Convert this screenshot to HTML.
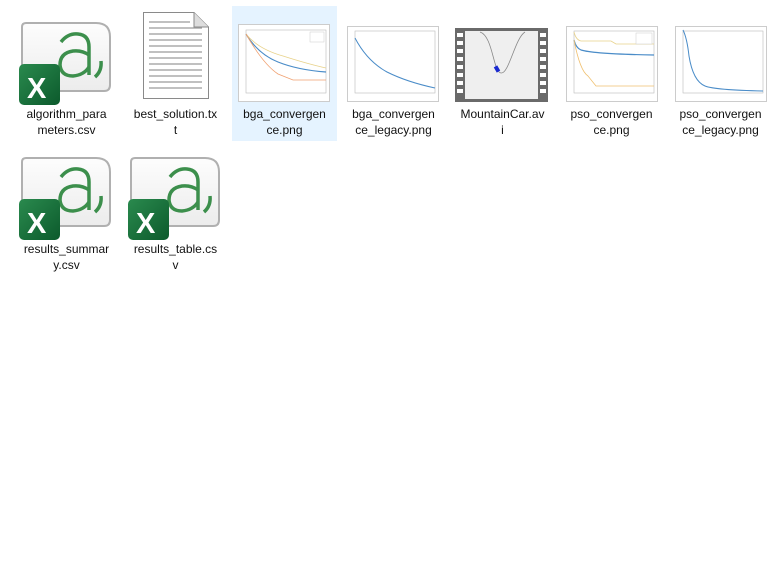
<!DOCTYPE html>
<html><head><meta charset="utf-8"><style>
body{margin:0;width:780px;height:582px;background:#fff;position:relative;overflow:hidden;font-family:"Liberation Sans","Noto Sans CJK SC",sans-serif}
.sel{position:absolute;left:232px;top:6px;width:105px;height:135px;background:#e5f3ff}
.lbl{position:absolute;width:105px;text-align:center;font-size:12px;line-height:16px;color:#111}
svg{position:absolute}
</style></head><body>
<div class="sel"></div>

<svg width="0" height="0"><defs>
<linearGradient id="cg" x1="0" y1="0" x2="0" y2="1"><stop offset="0" stop-color="#fdfdfd"/><stop offset="1" stop-color="#ececec"/></linearGradient>
<linearGradient id="xg" x1="0" y1="0" x2="1" y2="1"><stop offset="0" stop-color="#2a8a4e"/><stop offset="1" stop-color="#0c5a2c"/></linearGradient>
<g id="csv">
<path d="M4 0 H74 Q88 0 88 14 V62 Q88 68 82 68 H4 Q0 68 0 64 V4 Q0 0 4 0Z" fill="url(#cg)" stroke="#b0b0b0" stroke-width="2"/>
<g stroke="#3c8f4c" stroke-width="3.5" fill="none">
<path d="M39 19 Q46 10 56 11 Q67 12 67 24 V52"/>
<path d="M67 32 Q60 27 51 28 Q38 30 38 42 Q39 53 51 53 Q62 52 67 44"/>
<path d="M79 38 Q80 48 73 54"/>
</g>
<rect x="-3" y="41" width="41" height="41" rx="5" fill="url(#xg)"/>
<text x="5" y="75" font-family="Liberation Sans,sans-serif" font-weight="bold" font-size="29" fill="#fff">X</text>
</g>
</defs></svg>

<svg style="left:19px;top:22px" width="92" height="84" viewBox="-3 -1 92 84"><use href="#csv"/></svg>
<svg style="left:19px;top:157px" width="92" height="84" viewBox="-3 -1 92 84"><use href="#csv"/></svg>
<svg style="left:128px;top:157px" width="92" height="84" viewBox="-3 -1 92 84"><use href="#csv"/></svg>

<!-- txt -->
<svg style="left:143px;top:12px" width="66" height="87">
<path d="M0.5 0.5 H51 L65.5 15 V86.5 H0.5Z" fill="#fff" stroke="#8a8a8a"/>
<path d="M51 0.5 V15 H65.5" fill="#ddd" stroke="#8a8a8a"/>
<g stroke="#9a9a9a" stroke-width="1.3">
<line x1="6" y1="10" x2="47" y2="10"/><line x1="6" y1="16" x2="59" y2="16"/><line x1="6" y1="22" x2="59" y2="22"/><line x1="6" y1="28" x2="59" y2="28"/><line x1="6" y1="34" x2="59" y2="34"/><line x1="6" y1="40" x2="59" y2="40"/><line x1="6" y1="46" x2="59" y2="46"/><line x1="6" y1="52" x2="59" y2="52"/><line x1="6" y1="58" x2="59" y2="58"/><line x1="6" y1="64" x2="59" y2="64"/><line x1="6" y1="70" x2="59" y2="70"/><line x1="6" y1="76" x2="59" y2="76"/>
</g></svg>

<!-- bga conv -->
<svg style="left:238px;top:24px" width="92" height="78">
<rect x="0.5" y="0.5" width="91" height="77" fill="#fff" stroke="#ccc"/>
<rect x="8" y="6" width="80" height="63" fill="none" stroke="#bbb" stroke-width="0.6"/>
<path d="M8 10 Q20 30 40 38 Q60 46 88 48" stroke="#4a8cc8" stroke-width="1.2" fill="none"/>
<path d="M8 10 Q20 25 45 32 Q70 40 88 44" stroke="#e8d28a" stroke-width="0.8" fill="none"/>
<path d="M8 10 Q25 40 40 50 L55 56 H88" stroke="#f0a070" stroke-width="0.8" fill="none"/>
<rect x="72" y="8" width="14" height="10" fill="#fff" stroke="#ccc" stroke-width="0.5"/>
</svg>

<!-- bga legacy -->
<svg style="left:347px;top:26px" width="92" height="76">
<rect x="0.5" y="0.5" width="91" height="75" fill="#fff" stroke="#ccc"/>
<rect x="8" y="5" width="80" height="62" fill="none" stroke="#bbb" stroke-width="0.6"/>
<path d="M8 12 Q20 35 40 46 Q60 56 88 62" stroke="#4a8cc8" stroke-width="1" fill="none"/>
</svg>

<!-- avi -->
<svg style="left:455px;top:28px" width="93" height="74">
<rect x="0" y="0" width="93" height="74" fill="#6a6a6a"/>
<rect x="10" y="3" width="73" height="68" fill="#efefef"/>
<g fill="#fff">
<rect x="2" y="5" width="6" height="4"/><rect x="2" y="13" width="6" height="4"/><rect x="2" y="21" width="6" height="4"/><rect x="2" y="29" width="6" height="4"/><rect x="2" y="37" width="6" height="4"/><rect x="2" y="45" width="6" height="4"/><rect x="2" y="53" width="6" height="4"/><rect x="2" y="61" width="6" height="4"/>
<rect x="85" y="5" width="6" height="4"/><rect x="85" y="13" width="6" height="4"/><rect x="85" y="21" width="6" height="4"/><rect x="85" y="29" width="6" height="4"/><rect x="85" y="37" width="6" height="4"/><rect x="85" y="45" width="6" height="4"/><rect x="85" y="53" width="6" height="4"/><rect x="85" y="61" width="6" height="4"/>
</g>
<path d="M25 4 C38 8 38 44 46 45 C54 46 60 10 70 4" stroke="#888" fill="none" stroke-width="0.8"/>
<rect x="40" y="38" width="4" height="6" fill="#1a2ad0" transform="rotate(-30 42 41)"/>
</svg>

<!-- pso conv -->
<svg style="left:566px;top:26px" width="92" height="76">
<rect x="0.5" y="0.5" width="91" height="75" fill="#fff" stroke="#ccc"/>
<rect x="8" y="5" width="80" height="62" fill="none" stroke="#bbb" stroke-width="0.6"/>
<path d="M8 14 Q10 22 15 24 Q28 28 88 29" stroke="#4a8cc8" stroke-width="1.2" fill="none"/>
<path d="M8 6 Q10 14 15 15 H45 L50 18 H88" stroke="#e8d28a" stroke-width="0.8" fill="none"/>
<path d="M8 14 Q14 45 22 50 L30 60 H88" stroke="#f0c070" stroke-width="0.8" fill="none"/>
<rect x="70" y="7" width="16" height="11" fill="#fff" stroke="#ccc" stroke-width="0.5"/>
</svg>

<!-- pso legacy -->
<svg style="left:675px;top:26px" width="92" height="76">
<rect x="0.5" y="0.5" width="91" height="75" fill="#fff" stroke="#ccc"/>
<rect x="8" y="5" width="80" height="62" fill="none" stroke="#bbb" stroke-width="0.6"/>
<path d="M8 4 Q12 12 14 30 Q18 55 30 60 Q40 64 88 65" stroke="#4a8cc8" stroke-width="1" fill="none"/>
</svg>

<div class="lbl" style="left:14px;top:106px">algorithm_para<br>meters.csv</div>
<div class="lbl" style="left:123px;top:106px">best_solution.tx<br>t</div>
<div class="lbl" style="left:232px;top:106px">bga_convergen<br>ce.png</div>
<div class="lbl" style="left:341px;top:106px">bga_convergen<br>ce_legacy.png</div>
<div class="lbl" style="left:450px;top:106px">MountainCar.av<br>i</div>
<div class="lbl" style="left:559px;top:106px">pso_convergen<br>ce.png</div>
<div class="lbl" style="left:668px;top:106px">pso_convergen<br>ce_legacy.png</div>
<div class="lbl" style="left:14px;top:241px">results_summar<br>y.csv</div>
<div class="lbl" style="left:123px;top:241px">results_table.cs<br>v</div>
</body></html>
